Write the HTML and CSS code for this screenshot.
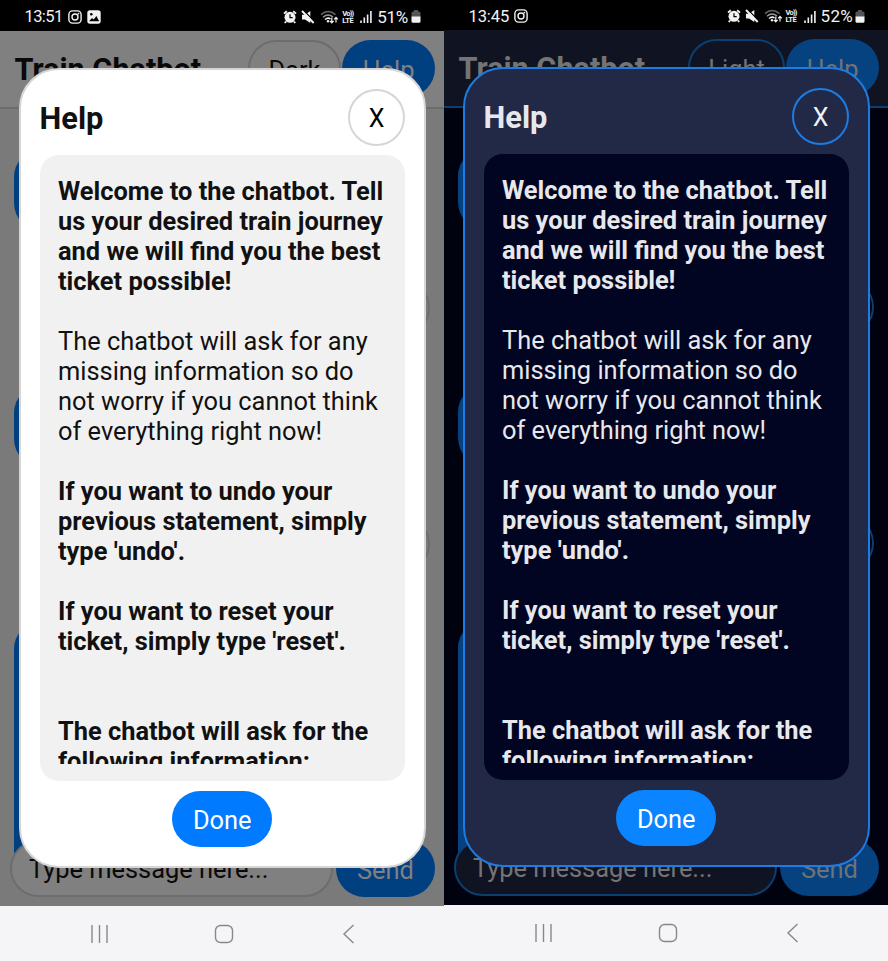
FILE: index.html
```html
<!DOCTYPE html>
<html lang="en">
<head>
<meta charset="utf-8">
<title>Train Chatbot</title>
<link rel="stylesheet" href="styles.css">
</head>
<body>
<svg class="defs" width="0" height="0">
  <symbol id="insta" viewBox="0 0 14 14"><g fill="none" stroke="currentColor" stroke-width="1.4"><rect x=".9" y=".9" width="12.2" height="12.2" rx="3.6"/><circle cx="7" cy="7" r="3"/></g><circle cx="10.4" cy="3.6" r=".9" fill="currentColor"/></symbol>
  <symbol id="photo" viewBox="0 0 14 14"><rect x=".3" y=".3" width="13.4" height="13.4" rx="2.6" fill="currentColor"/><path d="M2 11.2 5 8l1.6 1.5L9.4 6l2.800 5.200z" fill="#000"/><circle cx="4.3" cy="4.3" r="1.3" fill="#000"/></symbol>
  <symbol id="alarm" viewBox="0 0 14 14"><circle cx="7" cy="7.3" r="5.5" fill="currentColor"/><path d="M1 3.600 3.800 1.200M13 3.600 10.200 1.200M3 11.500 1.800 13M11 11.500l1.200 1.500" stroke="currentColor" stroke-width="1.9"/><path d="M7 4.300v3.400h2.700" fill="none" stroke="#000" stroke-width="1.2"/></symbol>
  <symbol id="mute" viewBox="0 0 14 14"><path d="M1 4.800h3L9.300 1v12L4 9.400H1z" fill="currentColor"/><path d="M2.200 0 13.500 11.500" stroke="#000" stroke-width="1.2"/><path d="M1 1 12.700 13" stroke="currentColor" stroke-width="1.9"/></symbol>
  <symbol id="wifi" viewBox="0 0 19 14"><g fill="none" stroke-width="1.5"><path d="M1 4.600Q8 -1.500 15.500 4.600" stroke="#666"/><path d="M3 7.200Q8 3 13 7" stroke="#999"/><path d="M5 9.500Q8 7 10.500 9" stroke="currentColor"/></g><circle cx="8" cy="11.3" r="1.2" fill="currentColor"/><path d="M11.800 7.500v5M10 10.800l1.800 2 1.800-2M16 12.500v-5M14.200 9.300l1.800-2 1.800 2" fill="none" stroke="currentColor" stroke-width="1.2"/></symbol>
  <symbol id="signal" viewBox="0 0 12 13"><path d="M1 13v-2.500M4.300 13V7.500M7.600 13V4.500M10.900 13V1" stroke="currentColor" stroke-width="1.6"/></symbol>
  <symbol id="battery" viewBox="0 0 10 13"><path d="M3 0h4v1.500h1Q9.500 1.500 9.500 3v4H.5V3Q.5 1.500 2 1.500h1z" fill="#555"/><path d="M.5 6.500h9v4.700Q9.500 12.700 8 12.700H2Q.5 12.700.5 11.200z" fill="currentColor"/></symbol>
</svg>
<div class="screens">
  <section class="phone light">
    <div class="status">
      <span class="time">13:51</span>
      <svg class="ic14"><use href="#insta"/></svg>
      <svg class="ic14 second"><use href="#photo"/></svg>
      <div class="indicators">
        <svg class="ic14"><use href="#alarm"/></svg><svg class="ic14 mute"><use href="#mute"/></svg><svg class="wifi"><use href="#wifi"/></svg>
        <span class="volte"><span class="vo">Vo))</span><span>LTE</span></span>
        <svg class="signal"><use href="#signal"/></svg><span class="pct">51%</span><svg class="battery"><use href="#battery"/></svg>
      </div>
    </div>
    <div class="app">
      <header class="topbar"><h1>Train Chatbot</h1><div class="btn outline toggle">Dark</div><div class="btn solid help">Help</div></header>
      <main class="chat"><div class="bubble bot"></div><div class="bubble user"></div><div class="bubble bot"></div><div class="bubble user"></div><div class="bubble bot last"></div></main>
      <footer class="composer"><div class="field">Type message here...</div><div class="btn solid send">Send</div></footer>
      <div class="modal">
        <div class="modal-head"><h2>Help</h2><div class="close">X</div></div>
        <div class="panel"><div class="scroll">
          <p class="b">Welcome to the chatbot. Tell<br>us your desired train journey<br>and we will find you the best<br>ticket possible!</p>
          <p>The chatbot will ask for any<br>missing information so do<br>not worry if you cannot think<br>of everything right now!</p>
          <p class="b">If you want to undo your<br>previous statement, simply<br>type 'undo'.</p>
          <p class="b">If you want to reset your<br>ticket, simply type 'reset'.</p>
          <p class="b gap">The chatbot will ask for the<br>following information:</p>
        </div></div>
        <div class="done">Done</div>
      </div>
    </div>
    <nav class="nav">
      <svg width="20" height="20" viewBox="0 0 20 20"><path d="M3 1v18M10.500 1v18M18 1v18"/></svg>
      <svg width="20" height="20" viewBox="0 0 20 20"><rect x="1.500" y="1.500" width="17" height="17" rx="5"/></svg>
      <svg width="20" height="20" viewBox="0 0 20 20"><path d="M14.500 1 5 10l9.500 9"/></svg>
    </nav>
  </section>
  <section class="phone dark">
    <div class="status">
      <span class="time">13:45</span>
      <svg class="ic14"><use href="#insta"/></svg>
      <div class="indicators">
        <svg class="ic14"><use href="#alarm"/></svg><svg class="ic14 mute"><use href="#mute"/></svg><svg class="wifi"><use href="#wifi"/></svg>
        <span class="volte"><span class="vo">Vo))</span><span>LTE</span></span>
        <svg class="signal"><use href="#signal"/></svg><span class="pct">52%</span><svg class="battery"><use href="#battery"/></svg>
      </div>
    </div>
    <div class="app">
      <header class="topbar"><h1>Train Chatbot</h1><div class="btn outline toggle">Light</div><div class="btn solid help">Help</div></header>
      <main class="chat"><div class="bubble bot"></div><div class="bubble user"></div><div class="bubble bot"></div><div class="bubble user"></div><div class="bubble bot last"></div></main>
      <footer class="composer"><div class="field">Type message here...</div><div class="btn solid send">Send</div></footer>
      <div class="modal">
        <div class="modal-head"><h2>Help</h2><div class="close">X</div></div>
        <div class="panel"><div class="scroll">
          <p class="b">Welcome to the chatbot. Tell<br>us your desired train journey<br>and we will find you the best<br>ticket possible!</p>
          <p>The chatbot will ask for any<br>missing information so do<br>not worry if you cannot think<br>of everything right now!</p>
          <p class="b">If you want to undo your<br>previous statement, simply<br>type 'undo'.</p>
          <p class="b">If you want to reset your<br>ticket, simply type 'reset'.</p>
          <p class="b gap">The chatbot will ask for the<br>following information:</p>
        </div></div>
        <div class="done">Done</div>
      </div>
    </div>
    <nav class="nav">
      <svg width="20" height="20" viewBox="0 0 20 20"><path d="M3 1v18M10.500 1v18M18 1v18"/></svg>
      <svg width="20" height="20" viewBox="0 0 20 20"><rect x="1.500" y="1.500" width="17" height="17" rx="5"/></svg>
      <svg width="20" height="20" viewBox="0 0 20 20"><path d="M14.500 1 5 10l9.500 9"/></svg>
    </nav>
  </section>
</div>
</body>
</html>
```
FILE: styles.css
```css
* { box-sizing: border-box; }
body { margin: 0; font-family: Roboto, sans-serif; font-size: 25.4px; }
h1, h2, p { margin: 0; }
.defs { position: absolute; }
.screens { display: grid; grid-template-columns: 444px 444px; height: 961px; overflow: hidden; }
.phone { display: flex; flex-direction: column; height: 961px; overflow: hidden; }
.light {
  --page: #7a7a7a; --bar: #808080; --line: #6d6d6d; --dim: #003f80; --dim-text: #808080;
  --title: #090909; --label: #090909; --modal: #fff; --modal-line: #d6d6d6; --panel: #f1f1f1;
  --text: #111; --accent: #007bff; --close: #000; --done: #fff;
}
.dark {
  --page: #00020f; --bar: #101322; --line: #0b3f70; --dim: #05427f; --dim-text: #707276;
  --title: #747474; --label: #747474; --modal: #212947; --modal-line: #1d7ce4; --panel: #010521;
  --text: #e8e8ec; --accent: #0a84ff; --close: #f0f0f5; --done: #fff;
}
.status { flex: none; height: 31px; padding: 2px 23px 0 24.5px; background: #000; color: #f2f2f2; display: flex; align-items: center; font-size: 16px; }
.dark .status { height: 30px; }
.time { width: 43px; font-size: 16.5px; letter-spacing: -0.6px; }
.dark .time { width: 45.5px; letter-spacing: -0.1px; }
.ic14 { width: 14px; height: 14px; }
.second { margin-left: 5px; }
.indicators { margin-left: auto; display: flex; align-items: center; }
.mute { margin-left: 4px; }
.wifi { width: 19px; height: 14px; margin-left: 5px; }
.volte { display: grid; grid-template-rows: 7px 7px; width: 13px; margin: 0 5px 0 3px; font-size: 7.5px; line-height: 7px; font-weight: 700; letter-spacing: -0.4px; }
.vo { letter-spacing: -0.8px; }
.signal { width: 12px; height: 13px; }
.pct { font-size: 17px; margin: 0 3px 0 5px; letter-spacing: -0.3px; }
.dark .pct { letter-spacing: 0.3px; margin-right: 2px; }
.battery { width: 10px; height: 13px; }
.app { position: relative; flex: none; height: 874.5px; background: var(--page); display: flex; flex-direction: column; }
.topbar { flex: none; height: 78px; background: var(--bar); border-bottom: 2.5px solid var(--line); display: flex; align-items: center; padding: 0 9px 1px 14.5px; }
h1 { font-size: 30.6px; color: var(--title); margin-right: auto; padding-top: 2px; white-space: nowrap; }
.btn { flex: none; height: 57px; border-radius: 28.5px; display: flex; align-items: center; justify-content: center; padding-top: 2px; color: var(--dim-text); }
.solid { background: var(--dim); }
.outline { border: 2px solid var(--line); color: var(--label); }
.toggle { width: 93px; }
.dark .toggle { width: 97px; }
.help { width: 93px; margin-left: 1px; }
.chat { flex: none; height: 745px; padding: 39.5px 14px 0; display: flex; flex-direction: column; gap: 49px; overflow: hidden; }
.bubble { flex: none; height: 82px; border-radius: 28px; background: var(--dim); width: 300px; }
.user { height: 56px; background: transparent; border: 2px solid var(--line); align-self: flex-end; }
.last { height: 260px; }
.composer { position: relative; margin-top: -14px; display: flex; justify-content: space-between; padding: 0 9px 0 10px; }
.field { width: 323px; height: 57px; border: 2px solid var(--line); border-radius: 28.5px; background: var(--bar); color: var(--label); padding-left: 17px; line-height: 55px; }
.send { width: 99px; }
.modal { position: absolute; left: 18.5px; top: 37px; width: 407.5px; height: 800px; border: 2px solid var(--modal-line); border-radius: 40px; background: var(--modal); padding: 19px; display: flex; flex-direction: column; align-items: center; }
.modal-head { align-self: stretch; display: flex; justify-content: space-between; align-items: center; }
h2 { font-size: 30.8px; color: var(--text); padding-top: 2px; }
.close { width: 57px; height: 57px; border: 2px solid var(--modal-line); border-radius: 50%; color: var(--close); display: flex; align-items: center; justify-content: center; padding-top: 2px; font-size: 25px; }
.panel { align-self: stretch; margin: 9px 0 10px; height: 626px; border-radius: 19px; background: var(--panel); padding: 18.5px; }
.scroll { height: 590px; overflow: hidden; color: var(--text); line-height: 30px; white-space: nowrap; padding-top: 2px; }
.scroll p { margin-bottom: 30px; }
.scroll .b { font-weight: 700; }
.scroll .gap { margin-top: 60px; }
.done { width: 100px; height: 57px; border-radius: 28.5px; background: var(--accent); color: var(--done); display: flex; align-items: center; justify-content: center; padding-top: 2px; }
.nav { flex: 1; background: #f5f5f8; display: flex; justify-content: center; gap: 105px; padding: 18.5px 0 0 4px; }
.nav svg { fill: none; stroke: #88888c; stroke-width: 1.4; }
```
